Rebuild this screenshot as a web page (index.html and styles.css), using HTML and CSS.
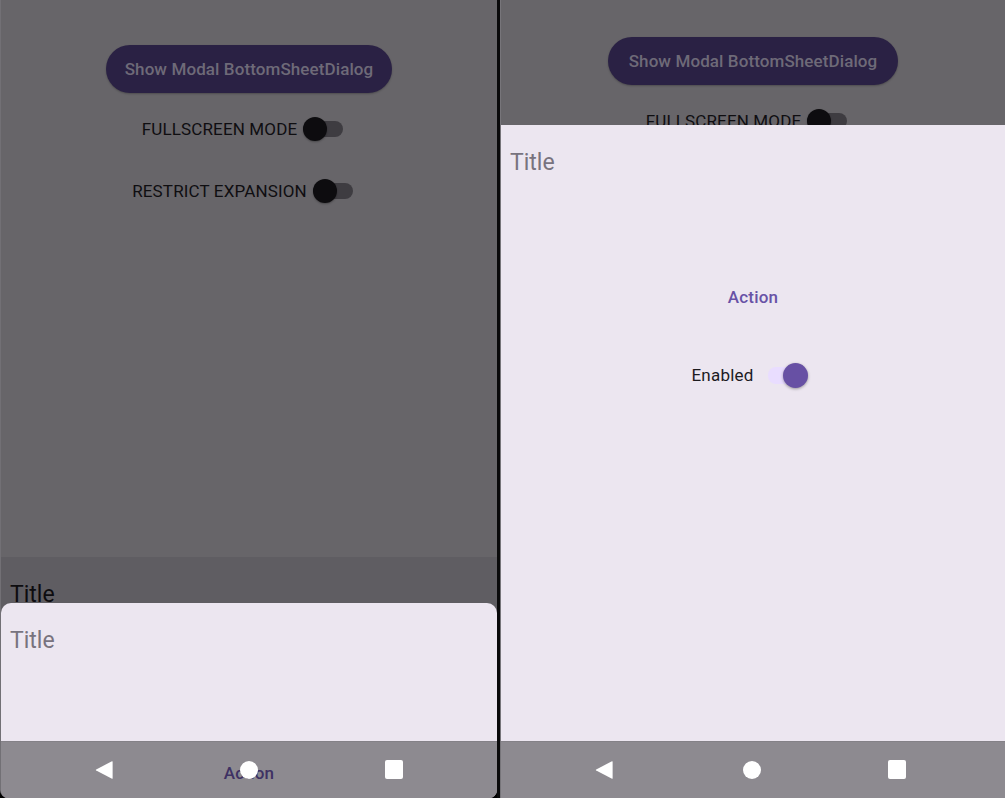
FILE: index.html
```html
<!DOCTYPE html>
<html lang="en">
<head>
<meta charset="utf-8">
<title>BottomSheetDialog demo</title>
<link rel="stylesheet" href="styles.css">
</head>
<body>
<main class="device">
  <section class="phone phone-left">
    <div class="app">
      <button class="pill">Show Modal BottomSheetDialog</button>
      <div class="toggle-row row-first">
        <span class="toggle-label">FULLSCREEN MODE</span>
        <span class="switch off"><span class="thumb"></span></span>
      </div>
      <div class="toggle-row row-second">
        <span class="toggle-label">RESTRICT EXPANSION</span>
        <span class="switch off"><span class="thumb"></span></span>
      </div>
    </div>
    <div class="sheet sheet-back">
      <div class="sheet-title">Title</div>
    </div>
    <div class="sheet sheet-front">
      <div class="sheet-title">Title</div>
      <div class="sheet-action"><span>Action</span></div>
    </div>
    <nav class="navbar">
      <svg class="nav-icon" width="18" height="20" viewBox="0 0 18 20"><path d="M17 1.2 Q17.6 1 17.6 1.8 L17.6 18.2 Q17.6 19 17 18.8 L1.2 10.6 Q0.4 10 1.2 9.4 Z" fill="#fff"/></svg>
      <span class="nav-home"></span>
      <span class="nav-recent"></span>
    </nav>
  </section>
  <div class="divider"></div>
  <section class="phone phone-right">
    <div class="app app-right">
      <button class="pill">Show Modal BottomSheetDialog</button>
      <div class="toggle-row row-first">
        <span class="toggle-label">FULLSCREEN MODE</span>
        <span class="switch off"><span class="thumb"></span></span>
      </div>
    </div>
    <div class="sheet sheet-full">
      <div class="sheet-title">Title</div>
      <div class="sheet-action"><span>Action</span></div>
      <div class="enabled-row">
        <span class="enabled-label">Enabled</span>
        <span class="switch on"><span class="thumb"></span></span>
      </div>
    </div>
    <nav class="navbar">
      <svg class="nav-icon" width="18" height="20" viewBox="0 0 18 20"><path d="M17 1.2 Q17.6 1 17.6 1.8 L17.6 18.2 Q17.6 19 17 18.8 L1.2 10.6 Q0.4 10 1.2 9.4 Z" fill="#fff"/></svg>
      <span class="nav-home"></span>
      <span class="nav-recent"></span>
    </nav>
  </section>
</main>
</body>
</html>
```

FILE: styles.css
```css
* { box-sizing: border-box; }
html, body {
  margin: 0;
  padding: 0;
  background: #000;
}
body {
  font-family: Roboto, "Noto Sans", sans-serif;
  width: 1005px;
  height: 798px;
  overflow: hidden;
}
.device {
  display: flex;
  width: 1005px;
  height: 798px;
}
.phone {
  position: relative;
  height: 798px;
  overflow: hidden;
  background: #676569;
}
.phone-left {
  width: 497px;
  border-radius: 0 0 8px 8px;
  border-left: 1px solid #727075;
}
.phone-right {
  width: 505px;
  border-left: 1px solid #77757a;
}
.divider {
  width: 3px;
  background: #0a0a0b;
}

/* app behind the scrim */
.app {
  display: flex;
  flex-direction: column;
  align-items: center;
  padding-top: 45px;
}
.app-right { padding-top: 37px; }
.pill {
  height: 48px;
  padding: 0 19px;
  border: 0;
  border-radius: 24px;
  background: #2a2144;
  color: #6e6a78;
  font-family: Roboto, sans-serif;
  font-weight: 500;
  font-size: 17px;
  letter-spacing: 0.1px;
  box-shadow: 0 1px 2px rgba(0,0,0,0.25);
}
.app-right .pill { padding: 0 21px; }
.toggle-row {
  display: flex;
  align-items: center;
  height: 24px;
  padding-right: 13px;
}
.row-first { margin-top: 24px; }
.row-second { margin-top: 38px; }
.toggle-label {
  font-size: 17px;
  color: #0f0e11;
  letter-spacing: 0.15px;
  margin-right: 6px;
}
.switch {
  position: relative;
  display: inline-block;
  width: 40px;
  height: 16px;
  border-radius: 8px;
}
.switch.off { background: #3e3c41; }
.switch.off .thumb {
  position: absolute;
  left: 0;
  top: -4px;
  width: 24px;
  height: 24px;
  border-radius: 50%;
  background: #0d0c0f;
  box-shadow: 0 1px 2px rgba(0,0,0,0.3);
}
.switch.on {
  width: 40px;
  height: 17px;
  background: #e9ddff;
}
.switch.on .thumb {
  position: absolute;
  right: 0;
  top: -4px;
  width: 25px;
  height: 25px;
  border-radius: 50%;
  background: #6750a4;
  box-shadow: 0 1px 3px rgba(0,0,0,0.35);
}

/* sheets (overlay the scrimmed app) */
.sheet {
  position: absolute;
  left: 0;
  right: 0;
  bottom: 0;
}
.sheet-back {
  top: 557px;
  background: #5f5d62;
}
.sheet-back .sheet-title { color: #0d0c0f; }
.sheet-front {
  top: 603px;
  background: #ece6f0;
  border-radius: 10px 10px 0 0;
}
.sheet-full {
  top: 125px;
  background: #ece6f0;
}
.sheet-title {
  padding: 22px 9px 0;
  height: 52px;
  line-height: 32px;
  font-size: 23px;
  color: #78737e;
}
.sheet-action {
  display: flex;
  justify-content: center;
  align-items: center;
  height: 48px;
  margin-top: 96px;
  font-size: 17px;
  font-weight: 500;
  color: #6852a6;
  letter-spacing: 0.2px;
}
.sheet-front .sheet-action { margin-top: 94px; }
.enabled-row {
  display: flex;
  justify-content: center;
  align-items: center;
  height: 32px;
  margin-top: 38px;
  padding-right: 6px;
}
.enabled-label {
  font-size: 17px;
  color: #1c1b1f;
  letter-spacing: 0.2px;
  margin-right: 15px;
}

/* system navigation bar, translucent over the sheet */
.navbar {
  position: absolute;
  left: 0;
  right: 0;
  bottom: 0;
  height: 57px;
  display: flex;
  align-items: center;
  justify-content: center;
  gap: 127px;
  padding-bottom: 1px;
  background: rgba(0,0,0,0.4);
  border-top: 1px solid rgba(0,0,0,0.06);
}
.phone-left .navbar { padding-right: 1px; }
.phone-right .navbar { padding-right: 6px; }
.nav-icon { display: block; }
.phone-right .nav-icon { margin-right: 3px; }
.nav-home {
  width: 18px;
  height: 18px;
  border-radius: 50%;
  background: #fff;
}
.nav-recent {
  width: 18px;
  height: 19px;
  border-radius: 2px;
  background: #fff;
}
```
